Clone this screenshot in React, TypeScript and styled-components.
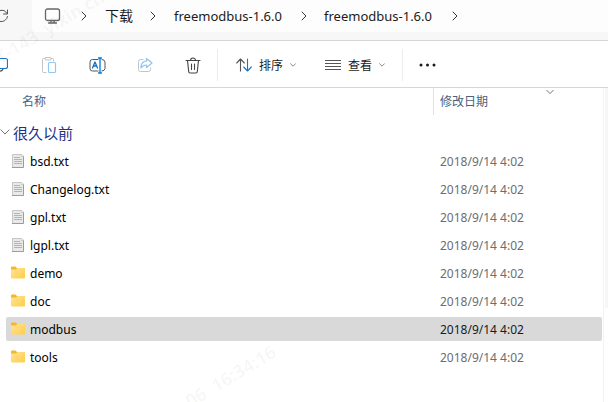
import React from "react";
import styled, { createGlobalStyle, css } from "styled-components";

const GlobalStyle = createGlobalStyle`
  * { box-sizing: border-box; }
  html, body, #root { height: 100%; }
  body {
    margin: 0;
    background: #ffffff;
    color: #1b1b1b;
    font-family: "Noto Sans", "Noto Sans CJK SC", sans-serif;
    font-size: 12px;
    overflow: hidden;
  }
  button { font: inherit; color: inherit; background: none; border: 0; padding: 0; margin: 0; }
`;

const Window = styled.div`
  position: relative;
  display: flex;
  flex-direction: column;
  min-height: 100%;
  overflow: hidden;
`;

const NavBar = styled.header`
  display: flex;
  height: 41px;
  padding-bottom: 8px;
  background: #f7f7f7;
  border-bottom: 1px solid #d6d6d6;
`;

const RefreshButton = styled.button`
  display: flex;
  align-items: center;
  width: 32px;
`;

const AddressBar = styled.nav`
  display: flex;
  flex: 1;
  align-items: center;
  background: #fdfdfd;
  border-bottom-left-radius: 4px;
`;

const Crumb = styled.a<{ $width: number; $size: number }>`
  width: ${(p) => p.$width}px;
  display: flex;
  flex: none;
  color: #1b1b1b;
  text-decoration: none;
  white-space: nowrap;
  font-size: ${(p) => p.$size}px;
  line-height: 20px;
`;

const CrumbArrow = styled.span<{ $width: number }>`
  display: flex;
  flex: none;
  width: ${(p) => p.$width}px;
`;

const DeviceLink = styled(Crumb)`
  padding-left: 12px;
`;

const ToolBar = styled.div`
  display: flex;
  align-items: center;
  height: 47px;
  padding-top: 2px;
  background: #ffffff;
  border-bottom: 1px solid #d6d6d6;
`;

const IconButton = styled.button`
  display: flex;
  align-items: center;
  justify-content: center;
  width: 48px;
  height: 32px;
`;

const EdgeButton = styled(IconButton)`
  width: 25px;
  justify-content: flex-start;
`;

const MenuButton = styled.button<{ $width: number }>`
  display: flex;
  align-items: center;
  gap: 7px;
  width: ${(p) => p.$width}px;
  height: 32px;
  white-space: nowrap;
  svg { flex: none; }
`;

const Divider = styled.span<{ $after: number }>`
  width: 1px;
  height: 32px;
  margin-right: ${(p) => p.$after}px;
  background: #ececec;
`;

const Content = styled.main`
  display: flex;
  flex: 1;
`;

const FileTable = styled.table`
  display: block;
  flex: 1;
  thead, tbody { display: block; }
`;

const rowGrid = css`
  display: grid;
  grid-template-columns: minmax(0, 1fr) 169px;
  margin: 0 1px 0 6px;
`;

const HeadRow = styled.tr`
  ${rowGrid}
  height: 27px;
`;

const HeadCell = styled.th<{ $inset: number; $line?: boolean }>`
  display: flex;
  align-items: center;
  gap: 58px;
  padding: 0 0 2px ${(p) => p.$inset}px;
  border-left: ${(p) => (p.$line ? "1px solid #e0e0e0" : "0")};
  color: #4c607a;
  font-weight: 400;
`;

const SortMark = styled.span`
  display: flex;
  align-self: flex-start;
`;

const GroupRow = styled.tr`
  display: flex;
  height: 34px;
  th { display: flex; padding: 0; font-weight: 400; }
`;

const GroupButton = styled.button`
  display: flex;
  align-items: center;
  gap: 3px;
  color: #1e3287;
  font-size: 15px;
`;

const FileRow = styled.tr<{ $selected: boolean }>`
  ${rowGrid}
  height: 24px;
  margin-bottom: 4px;
  border-radius: 2px;
  color: ${(p) => (p.$selected ? "#1b1b1b" : "#6d6d6d")};
  background: ${(p) => (p.$selected ? "#d9d9d9" : "transparent")};
`;

const NameCell = styled.td`
  display: flex;
  align-items: center;
  gap: 4px;
  padding: 0 0 0 4px;
  color: #000000;
`;

const DateCell = styled.td`
  display: flex;
  align-items: center;
  padding: 0 0 0 7px;
`;

const PaneEdge = styled.aside`
  width: 5px;
  border-left: 1px solid #f3f3f3;
  padding-left: 1px;
`;

const PaneFill = styled.div`
  height: 220px;
  background: #f7f7f7;
`;

const Watermark = styled.span<{ $x: number; $y: number }>`
  position: absolute;
  left: ${(p) => p.$x}px;
  top: ${(p) => p.$y}px;
  transform: rotate(-31deg);
  transform-origin: left bottom;
  color: rgba(0, 0, 0, 0.05);
  font-size: 18px;
  font-weight: 600;
  line-height: 16px;
  white-space: pre;
  pointer-events: none;
`;

const stroke = { fill: "none", strokeLinecap: "round", strokeLinejoin: "round" } as const;

const Chevron = () => (
  <svg width="6" height="10" viewBox="0 0 6 10" {...stroke} stroke="#333">
    <path d="M1 1l4 4-4 4" />
  </svg>
);

const DownChevron = ({ size = 6, color = "#888" }: { size?: number; color?: string }) => (
  <svg width={size} height={size} viewBox="0 0 8 8" {...stroke} stroke={color} strokeWidth={8 / size}>
    <path d="M.7 2.3L4 5.6l3.3-3.3" />
  </svg>
);

const RefreshIcon = () => (
  <svg width="9" height="14" viewBox="0 0 9 14" {...stroke} stroke="#555">
    <path d="M7.5 1v4H3.5M7 4.5A6 6 0 0 0 0 1.5M7.5 7.5A6 6 0 0 1 0 12.5" />
  </svg>
);

const MonitorIcon = () => (
  <svg width="18" height="18" viewBox="0 0 18 18" {...stroke} stroke="#666" strokeWidth="1.3">
    <rect x="1.5" y="2" width="14" height="11.5" rx="2" />
    <path d="M7 13.5v2M10 13.5v2M4.5 16h8" />
  </svg>
);

const CopyIcon = () => (
  <svg width="8" height="16" viewBox="0 0 8 16" {...stroke} stroke="#1976c8" strokeWidth="1.2">
    <path d="M0 1.500h5.500a2 2 0 0 1 2 2v6a2 2 0 0 1-2 2H0" />
    <path d="M3 12c-.5 1.500-1.500 2.200-3 2.200" stroke="#555" />
  </svg>
);

const PasteIcon = () => (
  <svg width="16" height="18" viewBox="0 0 16 18" {...stroke} stroke="#c4c4c4">
    <path d="M4 2.5H2.5a1 1 0 0 0-1 1v12a1 1 0 0 0 1 1H5M10 2.5h1.5a1 1 0 0 1 1 1V5" />
    <rect x="4" y="1.5" width="6" height="2.5" rx="1" />
    <rect x="7.5" y="6.500" width="7" height="10" rx="1" stroke="#8fc8f5" strokeWidth="1.200" />
  </svg>
);

const RenameIcon = () => (
  <svg width="17" height="17" viewBox="0 0 17 17" {...stroke} stroke="#555">
    <path d="M9 2.5H3.5a2.5 2.5 0 0 0-2.5 2.5v6.5A2.5 2.5 0 0 0 3.5 14H9M13 2.5a3 3 0 0 1 3 2.500v6.500a3 3 0 0 1-3 2.500" />
    <path d="M3.500 11L6 5l2.500 6M4.300 9h3.400" stroke="#0c72ca" strokeWidth="1.300" />
    <path d="M9.500 1h3M9.500 16h3M11 1v15" stroke="#0078d4" strokeWidth="1.300" />
  </svg>
);

const ShareIcon = () => (
  <svg width="16" height="16" viewBox="0 0 16 16" {...stroke} stroke="#c4c4c4">
    <path d="M6 2.5H3.5a2 2 0 0 0-2 2v8a2 2 0 0 0 2 2h8a2 2 0 0 0 2-2V11" />
    <path d="M9.500 1.500L15 6l-5.500 4.500V8C7 8 5.500 9 4 11c0-4 2-7 5.500-7z" stroke="#8fc5ef" strokeWidth="1.200" />
  </svg>
);

const TrashIcon = () => (
  <svg width="16" height="17" viewBox="0 0 16 17" {...stroke} stroke="#444" strokeWidth="1.1">
    <path d="M1 3.500h14M5.500 3.500a2.500 2.500 0 0 1 5 0M2.500 3.500l1.200 11a1.500 1.500 0 0 0 1.500 1.500h5.600a1.500 1.500 0 0 0 1.500-1.500l1.200-11M6.500 7v5.500M9.500 7v5.500" />
  </svg>
);

const SortIcon = () => (
  <svg width="16" height="14" viewBox="0 0 16 14" {...stroke} stroke="#555" strokeWidth="1.1">
    <path d="M4.500 13V1M.7 5l3.800-4 3.800 4" />
    <path d="M11.500 1v12M7.700 9l3.800 4 3.800-4" stroke="#1976c8" />
  </svg>
);

const ViewIcon = () => (
  <svg width="16" height="12" viewBox="0 0 16 12" stroke="#555">
    <path d="M0 1.500h16M0 4.500h16M0 7.500h16M0 10.500h16" />
  </svg>
);

const MoreIcon = () => (
  <svg width="17" height="4" viewBox="0 0 17 4" fill="#1b1b1b">
    <circle cx="2" cy="2" r="1.500" />
    <circle cx="8.500" cy="2" r="1.500" />
    <circle cx="15" cy="2" r="1.500" />
  </svg>
);

const TextFileIcon = () => (
  <svg width="16" height="16" viewBox="0 0 16 16">
    <path d="M2 1h9.500L14 3v12H2z" fill="#e9e9e9" />
    <path d="M2.500 14V1.500H11" fill="none" stroke="#c6c6c6" />
    <path d="M11 1l3 2.500h-3z" fill="#fff" stroke="#b0b0b0" strokeWidth=".5" />
    <path d="M13.500 3.500v11H2" fill="none" stroke="#9c9c9c" />
    <path d="M4 4.500h6M4 6.500h8M4 8.500h8M4 10.500h8" stroke="#b4b4b4" />
  </svg>
);

const FolderIcon = () => (
  <svg width="16" height="16" viewBox="0 0 16 16">
    <defs>
      <linearGradient id="folder" x1="0" y1="0" x2="1" y2="1">
        <stop offset="0" stopColor="#ffe59a" />
        <stop offset="1" stopColor="#ffcd45" />
      </linearGradient>
    </defs>
    <path d="M1 2.500q0-1 1-1h3.500L7 3h7q1 0 1 1v4H1z" fill="#f5b62a" />
    <path d="M1 4.500h5L7.500 3H14q1 0 1 1v8.500q0 1-1 1H2q-1 0-1-1z" fill="url(#folder)" />
  </svg>
);

const files = [
  { name: "bsd.txt", folder: false },
  { name: "Changelog.txt", folder: false },
  { name: "gpl.txt", folder: false },
  { name: "lgpl.txt", folder: false },
  { name: "demo", folder: true },
  { name: "doc", folder: true },
  { name: "modbus", folder: true },
  { name: "tools", folder: true },
];

export default function App() {
  return (
    <>
      <GlobalStyle />
      <Window>
        <NavBar>
          <RefreshButton aria-label="刷新"><RefreshIcon /></RefreshButton>
          <AddressBar aria-label="地址">
            <DeviceLink href="#" $width={49} $size={13} aria-label="此电脑"><MonitorIcon /></DeviceLink>
            <CrumbArrow $width={24}><Chevron /></CrumbArrow>
            <Crumb href="#" $width={45} $size={14}>下载</Crumb>
            <CrumbArrow $width={24}><Chevron /></CrumbArrow>
            <Crumb href="#" $width={127} $size={13}>freemodbus-1.6.0</Crumb>
            <CrumbArrow $width={23}><Chevron /></CrumbArrow>
            <Crumb href="#" $width={128} $size={13}>freemodbus-1.6.0</Crumb>
            <CrumbArrow $width={24}><Chevron /></CrumbArrow>
          </AddressBar>
        </NavBar>

        <ToolBar role="toolbar">
          <EdgeButton aria-label="复制"><CopyIcon /></EdgeButton>
          <IconButton aria-label="粘贴"><PasteIcon /></IconButton>
          <IconButton aria-label="重命名"><RenameIcon /></IconButton>
          <IconButton aria-label="共享"><ShareIcon /></IconButton>
          <IconButton aria-label="删除"><TrashIcon /></IconButton>
          <Divider $after={18} />
          <MenuButton $width={89}><SortIcon />排序<DownChevron /></MenuButton>
          <MenuButton $width={77}><ViewIcon />查看<DownChevron /></MenuButton>
          <Divider $after={0} />
          <IconButton aria-label="更多"><MoreIcon /></IconButton>
        </ToolBar>

        <Content>
          <FileTable>
            <thead>
              <HeadRow>
                <HeadCell scope="col" $inset={16}>名称</HeadCell>
                <HeadCell scope="col" $inset={6} $line>
                  修改日期
                  <SortMark><DownChevron size={8} color="#777" /></SortMark>
                </HeadCell>
              </HeadRow>
            </thead>
            <tbody>
              <GroupRow>
                <th colSpan={2} scope="rowgroup">
                  <GroupButton aria-expanded="true">
                    <DownChevron size={10} color="#777" />
                    很久以前
                  </GroupButton>
                </th>
              </GroupRow>
              {files.map((file) => (
                <FileRow key={file.name} $selected={file.name === "modbus"}>
                  <NameCell>
                    {file.folder ? <FolderIcon /> : <TextFileIcon />}
                    {file.name}
                  </NameCell>
                  <DateCell>2018/9/14 4:02</DateCell>
                </FileRow>
              ))}
            </tbody>
          </FileTable>
          <PaneEdge><PaneFill /></PaneEdge>
        </Content>

        <Watermark $x={1} $y={49} aria-hidden="true">T-143  yixin.cn</Watermark>
        <Watermark $x={191} $y={393} aria-hidden="true">06  16:34:16</Watermark>
      </Window>
    </>
  );
}
